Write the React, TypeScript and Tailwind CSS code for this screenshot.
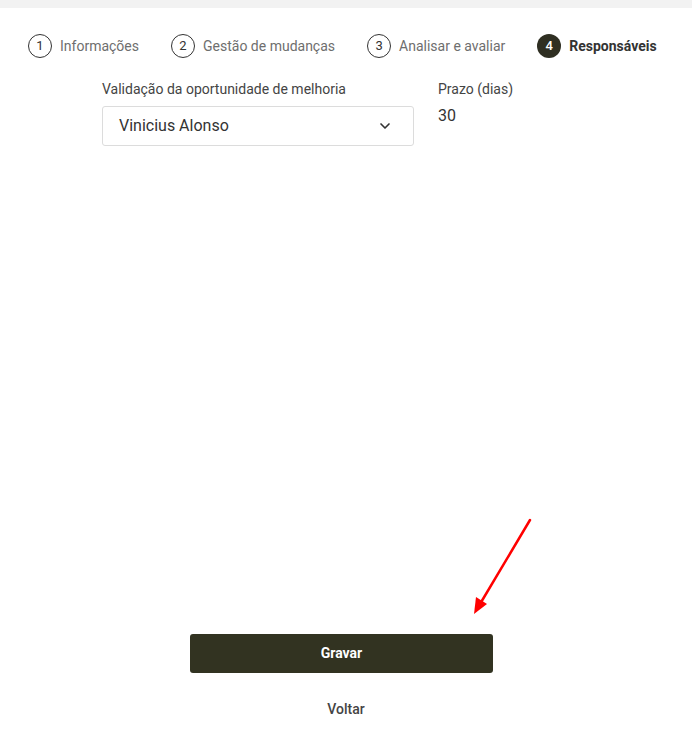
import { ChevronDown } from "lucide-react";

const StepItem = ({
  n,
  label,
  active,
}: {
  n: number;
  label: string;
  active?: boolean;
}) => (
  <div className="flex items-center gap-2">
    {active ? (
      <span className="flex h-6 w-6 items-center justify-center rounded-full bg-[#2f2f22] text-[13px] font-medium text-white">
        {n}
      </span>
    ) : (
      <span className="flex h-6 w-6 items-center justify-center rounded-full border border-[#333] text-[13px] text-[#333]">
        {n}
      </span>
    )}
    <span
      className={
        active
          ? "text-[14px] font-bold text-[#333]"
          : "text-[14px] text-[#6e6e6e]"
      }
    >
      {label}
    </span>
  </div>
);

export default function App() {
  return (
    <div className="relative flex min-h-[751px] flex-col bg-white font-['Roboto',sans-serif]">
      <div className="h-2 bg-[#f2f2f2]" />

      <div className="flex items-center pl-[28px] pt-[26px]">
        <StepItem n={1} label="Informações" />
        <div className="ml-[32px]">
          <StepItem n={2} label="Gestão de mudanças" />
        </div>
        <div className="ml-[32px]">
          <StepItem n={3} label="Analisar e avaliar" />
        </div>
        <div className="ml-[32px]">
          <StepItem n={4} label="Responsáveis" active />
        </div>
      </div>

      <div className="mt-[21px] flex gap-[24px] pl-[102px]">
        <div className="w-[312px]">
          <label className="block text-[14px] leading-5 text-[#444]">
            Validação da oportunidade de melhoria
          </label>
          <div className="mt-[7px] flex h-[40px] items-center justify-between rounded-[3px] border border-[#dcdcdc] pl-[16px] pr-[20px]">
            <span className="text-[16px] text-[#333]">Vinicius Alonso</span>
            <ChevronDown size={16} strokeWidth={2.5} className="text-[#333]" />
          </div>
        </div>
        <div>
          <label className="block text-[14px] leading-5 text-[#444]">
            Prazo (dias)
          </label>
          <div className="mt-[5px] text-[16px] text-[#333]">30</div>
        </div>
      </div>

      <div className="flex-1" />

      <div className="flex flex-col items-center pb-[31px]">
        <button className="ml-[-9px] flex h-[39px] w-[303px] items-center justify-center rounded-[3px] bg-[#323321] text-[14px] font-bold text-white">
          Gravar
        </button>
        <button className="mt-[26px] text-[14px] font-medium text-[#444]">
          Voltar
        </button>
      </div>

      <svg
        className="pointer-events-none absolute left-0 top-0"
        width="692"
        height="751"
      >
        <line
          x1="530"
          y1="520"
          x2="480"
          y2="604"
          stroke="#ff0000"
          strokeWidth="2.5"
          strokeLinecap="round"
        />
        <polygon points="474,614 476,597 487,604" fill="#ff0000" />
      </svg>
    </div>
  );
}
